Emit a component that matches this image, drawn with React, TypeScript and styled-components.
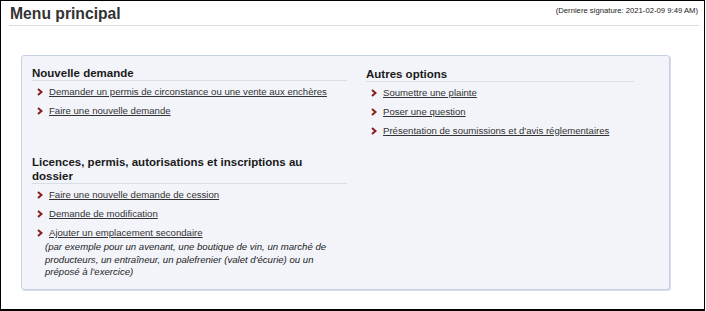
import React from "react";
import styled, { createGlobalStyle } from "styled-components";

const Global = createGlobalStyle`
  html, body { margin: 0; padding: 0; background: #fff; }
  body { font-family: "Liberation Sans", Arial, sans-serif; color: #222; }
`;

const Frame = styled.div`
  box-sizing: border-box;
  width: 705px;
  height: 311px;
  border: 1px solid #000;
  border-bottom-width: 2px;
  overflow: hidden;
`;

const Header = styled.header`
  display: flex;
  justify-content: space-between;
  align-items: flex-start;
  margin: 0 5px 0 8px;
  padding-top: 3px;
  height: 21px;
  border-bottom: 1px solid #dcdcdc;
`;

const Title = styled.h1`
  margin: 0;
  font-size: 15.7px;
  line-height: 19px;
  font-weight: bold;
  color: #333;
  padding-left: 1px;
`;

const Signature = styled.div`
  font-size: 7.7px;
  line-height: 10px;
  color: #222;
  padding-top: 2px;
  padding-right: 1px;
`;

const Panel = styled.section`
  box-sizing: border-box;
  margin: 29px 0 0 20px;
  width: 649px;
  height: 235px;
  background: #f2f4f9;
  border: 1px solid #c6d0e2;
  border-radius: 3px;
  box-shadow: 1px 1px 0 #d6dcea;
  padding: 10px 35px 12px 10px;
  display: flex;
  gap: 19px;
`;

const Column = styled.div<{ $width: number; $offset?: number }>`
  width: ${(p) => p.$width}px;
  padding-top: ${(p) => p.$offset ?? 0}px;
  display: flex;
  flex-direction: column;
`;

const Group = styled.div<{ $gap?: number }>`
  margin-top: ${(p) => p.$gap ?? 0}px;
`;

const Heading = styled.h2`
  margin: 0;
  font-size: 11.5px;
  line-height: 14px;
  font-weight: bold;
  color: #1a1a1a;
  padding: 0 30px 0 0;
  border-bottom: 1px solid #d9dde6;
`;

const List = styled.ul`
  list-style: none;
  margin: 5px 0 0;
  padding: 0 0 0 5px;
`;

const Item = styled.li`
  display: flex;
  flex-direction: column;
  margin-bottom: 7px;
`;

const LinkRow = styled.div`
  display: flex;
  align-items: center;
  gap: 6px;
  height: 12px;
`;

const Link = styled.a`
  font-size: 9.6px;
  line-height: 12px;
  color: #333;
  text-decoration: underline;
  cursor: pointer;
`;

const Note = styled.p`
  margin: 2px 0 0 8px;
  font-size: 9.6px;
  line-height: 12.5px;
  font-style: italic;
  color: #222;
`;

const Chevron = () => (
  <svg width="6" height="8" viewBox="0 0 6 8" aria-hidden="true">
    <path d="M1 1 L4.5 4 L1 7" fill="none" stroke="#8a1c1c" strokeWidth="2" />
  </svg>
);

type Entry = { label: string; note?: string };

const MenuList = ({ items }: { items: Entry[] }) => (
  <List>
    {items.map((it) => (
      <Item key={it.label}>
        <LinkRow>
          <Chevron />
          <Link>{it.label}</Link>
        </LinkRow>
        {it.note && <Note>{it.note}</Note>}
      </Item>
    ))}
  </List>
);

export default function App() {
  return (
    <>
      <Global />
      <Frame>
        <Header>
          <Title>Menu principal</Title>
          <Signature>(Derniere signature: 2021-02-09 9:49 AM)</Signature>
        </Header>
        <Panel>
          <Column $width={315}>
            <Group>
              <Heading>Nouvelle demande</Heading>
              <MenuList
                items={[
                  { label: "Demander un permis de circonstance ou une vente aux enchères" },
                  { label: "Faire une nouvelle demande" },
                ]}
              />
            </Group>
            <Group $gap={31}>
              <Heading>Licences, permis, autorisations et inscriptions au dossier</Heading>
              <MenuList
                items={[
                  { label: "Faire une nouvelle demande de cession" },
                  { label: "Demande de modification" },
                  {
                    label: "Ajouter un emplacement secondaire",
                    note:
                      "(par exemple pour un avenant, une boutique de vin, un marché de producteurs, un entraîneur, un palefrenier (valet d'écurie) ou un préposé à l'exercice)",
                  },
                ]}
              />
            </Group>
          </Column>
          <Column $width={268} $offset={1}>
            <Group>
              <Heading>Autres options</Heading>
              <MenuList
                items={[
                  { label: "Soumettre une plainte" },
                  { label: "Poser une question" },
                  { label: "Présentation de soumissions et d'avis réglementaires" },
                ]}
              />
            </Group>
          </Column>
        </Panel>
      </Frame>
    </>
  );
}
